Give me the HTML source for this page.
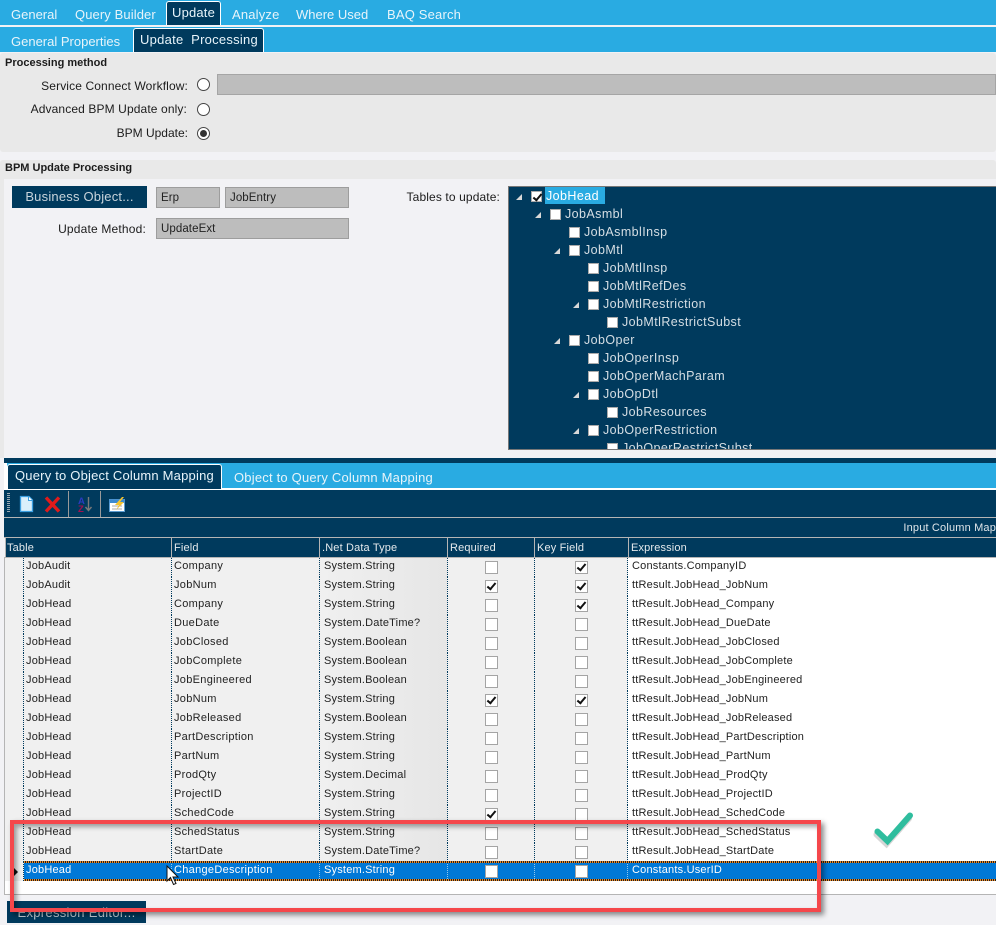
<!DOCTYPE html>
<html><head><meta charset="utf-8">
<style>
html,body{margin:0;padding:0;width:996px;height:925px;overflow:hidden;background:#f2f2f5;font-family:"Liberation Sans",sans-serif}
div,span{position:absolute;white-space:nowrap;box-sizing:border-box}
.t{font-size:13px;letter-spacing:.18px;color:#e8f4fa;line-height:16px}
.l{font-size:12px;letter-spacing:.12px;color:#1c1c1c;line-height:16px}
.b{font-size:11px;font-weight:bold;color:#1c1c1c;letter-spacing:0;line-height:14px}
.r{width:13px;height:13px;border-radius:50%;border:1.5px solid #444;background:#fff}
.f{background:#bdbdbd;border:1px solid #9d9d9d;font-size:11.5px;letter-spacing:.08px;color:#222;line-height:21px;padding-left:4px}
.n{left:0;font-size:12.5px;letter-spacing:.42px;color:#d5dee4;line-height:16px}
.c{width:11px;height:11px;background:#fff;border:1px solid #aaa;margin-left:-1px}
.x{width:0;height:0;margin-left:-1px;border-style:solid;border-width:0 0 6px 6px;border-color:transparent transparent #d8d8d8 transparent}
.h{top:538px;height:19px;background:#003a5d;border-left:1px solid #b5b5b5;color:#e4e9ec;font-size:11px;letter-spacing:.15px;line-height:21px;padding-left:2px}
.g{left:5px;width:991px;height:19px;border-bottom:1px dotted #003a5d;font-size:11px;letter-spacing:.2px;color:#222;line-height:16px}
.g span{top:0;height:19px;padding-left:2px;border-right:1px dotted #003a5d}
.s0{left:0;width:19px;background:#f0f0f0;border-right:1px dotted #003a5d}
.s1{left:19px;width:148px;background:#f0f0f0}
.s2{left:167px;width:148px;background:#f0f0f0;letter-spacing:.3px}
.s3{left:315px;width:128px;padding-left:4px!important;background:linear-gradient(90deg,#f0f0f0,#e6e6e6)}
.s4{left:443px;width:87px;background:#f0f0f0}
.s5{left:530px;width:93px;background:#f0f0f0}
.s6{left:623px;width:368px;background:#fff;padding-left:4px!important;border-right:0!important}
.k{width:11px;height:11px;background:#fff;border:1px solid #a4a4a4;top:3px;z-index:2}
.ck::after{content:"";position:absolute;left:2.500px;top:0;width:3px;height:7px;border:solid #111;border-width:0 2px 2px 0;transform:rotate(40deg)}
</style></head><body>

<div style="left:0;top:0;width:996px;height:25px;background:#29abe2"></div>
<div style="left:0;top:27px;width:996px;height:25px;background:#29abe2"></div>
<div class="t" style="left:11px;top:7px;letter-spacing:0">General</div>
<div class="t" style="left:75px;top:7px;letter-spacing:.1px">Query Builder</div>
<div class="t" style="left:166px;top:1px;width:55px;height:24px;background:#003a5d;border:1px solid #fff;border-bottom:0;border-radius:3px 3px 0 0;padding:3px 0 0 5px">Update</div>
<div class="t" style="left:232px;top:7px">Analyze</div>
<div class="t" style="left:296px;top:7px;letter-spacing:0">Where Used</div>
<div class="t" style="left:387px;top:7px">BAQ Search</div>
<div class="t" style="left:11px;top:34px;letter-spacing:0">General Properties</div>
<div class="t" style="left:133px;top:28px;width:131px;height:24px;background:#003a5d;border:1px solid #fff;border-bottom:0;border-radius:3px 3px 0 0;padding:3px 0 0 6px;letter-spacing:.25px">Update&nbsp; Processing</div>

<div style="left:0;top:53px;width:996px;height:99px;background:#e9e9e9;border-radius:3px"></div>
<div class="b" style="left:5px;top:56px">Processing method</div>
<div class="l" style="right:808px;top:78px">Service Connect Workflow:</div>
<div class="r" style="left:197px;top:78px"></div>
<div style="left:217px;top:74px;width:779px;height:21px;background:#bdbdbd;border:1px solid #a5a5a5"></div>
<div class="l" style="right:809px;top:101px">Advanced BPM Update only:</div>
<div class="r" style="left:197px;top:103px"></div>
<div class="l" style="right:808px;top:125px;letter-spacing:0">BPM Update:</div>
<div class="r" style="left:197px;top:127px"></div>
<div style="left:200px;top:130px;width:7px;height:7px;border-radius:50%;background:#333"></div>

<div style="left:0;top:160px;width:996px;height:19px;background:#e9e9e9;border-radius:3px 3px 0 0"></div>
<div style="left:0;top:179px;width:4px;height:279px;background:#e9e9e9"></div>
<div class="b" style="left:5px;top:161px">BPM Update Processing</div>
<div style="left:12px;top:186px;width:135px;height:22px;background:#003a5d;color:#c8d4dc;font-size:13px;letter-spacing:.2px;line-height:22px;text-align:center">Business Object...</div>
<div class="f" style="left:156px;top:187px;width:64px;height:21px">Erp</div>
<div class="f" style="left:225px;top:187px;width:124px;height:21px">JobEntry</div>
<div class="l" style="right:850px;top:221px;letter-spacing:.18px">Update Method:</div>
<div class="f" style="left:156px;top:218px;width:193px;height:21px">UpdateExt</div>
<div class="l" style="right:496px;top:189px">Tables to update:</div>

<div style="left:508px;top:186px;width:488px;height:264px;background:#003a5d;border:1px solid #777;border-right:0;overflow:hidden">
<div style="left:36px;top:0;width:60px;height:17px;background:#29abe2"></div>
<div class="x" style="left:8px;top:7px"></div><div class="c ck" style="left:23px;top:4px"></div><div class="n" style="left:37px;top:1px;color:#fff">JobHead</div>
<div class="x" style="left:27px;top:25px"></div><div class="c" style="left:42px;top:22px"></div><div class="n" style="left:56px;top:19px">JobAsmbl</div>
<div class="c" style="left:61px;top:40px"></div><div class="n" style="left:75px;top:37px">JobAsmblInsp</div>
<div class="x" style="left:46px;top:61px"></div><div class="c" style="left:61px;top:58px"></div><div class="n" style="left:75px;top:55px">JobMtl</div>
<div class="c" style="left:80px;top:76px"></div><div class="n" style="left:94px;top:73px">JobMtlInsp</div>
<div class="c" style="left:80px;top:94px"></div><div class="n" style="left:94px;top:91px">JobMtlRefDes</div>
<div class="x" style="left:65px;top:115px"></div><div class="c" style="left:80px;top:112px"></div><div class="n" style="left:94px;top:109px">JobMtlRestriction</div>
<div class="c" style="left:99px;top:130px"></div><div class="n" style="left:113px;top:127px">JobMtlRestrictSubst</div>
<div class="x" style="left:46px;top:151px"></div><div class="c" style="left:61px;top:148px"></div><div class="n" style="left:75px;top:145px">JobOper</div>
<div class="c" style="left:80px;top:166px"></div><div class="n" style="left:94px;top:163px">JobOperInsp</div>
<div class="c" style="left:80px;top:184px"></div><div class="n" style="left:94px;top:181px">JobOperMachParam</div>
<div class="x" style="left:65px;top:205px"></div><div class="c" style="left:80px;top:202px"></div><div class="n" style="left:94px;top:199px">JobOpDtl</div>
<div class="c" style="left:99px;top:220px"></div><div class="n" style="left:113px;top:217px">JobResources</div>
<div class="x" style="left:65px;top:241px"></div><div class="c" style="left:80px;top:238px"></div><div class="n" style="left:94px;top:235px">JobOperRestriction</div>
<div class="c" style="left:99px;top:256px"></div><div class="n" style="left:113px;top:253px">JobOperRestrictSubst</div>
</div>

<div style="left:4px;top:458px;width:992px;height:5px;background:#003a5d"></div>
<div style="left:4px;top:463px;width:992px;height:25px;background:#29abe2"></div>
<div style="left:4px;top:488px;width:992px;height:2px;background:#fff"></div>
<div style="left:4px;top:463px;width:3px;height:27px;background:#fff"></div>
<div class="t" style="left:7px;top:464px;width:215px;height:25px;background:#003a5d;border:1px solid #fff;border-bottom:0;border-radius:3px 3px 0 0;padding:3px 0 0 7px;letter-spacing:.2px">Query to Object Column Mapping</div>
<div class="t" style="left:234px;top:470px;letter-spacing:.2px">Object to Query Column Mapping</div>

<div style="left:4px;top:490px;width:992px;height:48px;background:#003a5d"></div>
<div style="left:4px;top:517px;width:992px;height:1px;background:#b5b5b5"></div>
<div style="left:4px;top:537px;width:992px;height:1px;background:#b5b5b5"></div>
<div style="left:7px;top:493px;width:3px;height:20px;background:repeating-linear-gradient(#9aa9b3 0 1px,transparent 1px 2px)"></div>
<div style="left:68px;top:491px;width:1px;height:26px;background:#9a9a9a"></div>
<div style="left:100px;top:491px;width:1px;height:26px;background:#9a9a9a"></div>
<svg style="position:absolute;left:0;top:485px" width="140" height="33" viewBox="0 0 140 33">
<path d="M20.500 11.500H29L32.500 15V26.500H20.500Z" fill="#d9effb" stroke="#3b9fe0" stroke-width="1.300"/><path d="M28.500 11.500V15.500H32.500" fill="#fff" stroke="#3b9fe0"/>
<path d="M46 12.500L59 26.500M59 12.500L46 26.500" stroke="#e01b1b" stroke-width="3.400" fill="none"/>
<path d="M88.500 12V24.500M85.500 22L88.500 25.500L91.500 22" stroke="#7a7a7a" stroke-width="1.400" fill="none"/>
<path d="M109.500 14.500H124.500V26.500H109.500Z" fill="#fff" stroke="#5a9bd0"/><path d="M109.500 14.500H124.500V18H109.500Z" fill="#3b8ad0"/><path d="M112 21H122M112 24H122" stroke="#aaa"/>
<path d="M122 12L115 20H119L116 25L124 17H120L124 12Z" fill="#f4c430"/>
<text x="78" y="19" font-family="Liberation Sans" font-size="9.500" font-weight="bold" fill="#2a3bc0">A</text>
<text x="78" y="27" font-family="Liberation Sans" font-size="9.500" font-weight="bold" fill="#a01050">Z</text>
</svg>
<div style="right:0;top:521px;color:#dfe5e9;font-size:11px;letter-spacing:.17px;line-height:14px">Input Column Map</div>

<div style="left:5px;top:538px;width:991px;height:19px;background:#003a5d"></div>
<div class="h" style="left:5px;width:167px;padding-left:1px">Table</div>
<div class="h" style="left:171px;width:149px">Field</div>
<div class="h" style="left:319px;width:128px">.Net Data Type</div>
<div class="h" style="left:447px;width:87px">Required</div>
<div class="h" style="left:534px;width:94px">Key Field</div>
<div class="h" style="left:628px;width:368px">Expression</div>
<div style="left:5px;top:557px;width:991px;height:1px;background:#b5b5b5;z-index:3"></div>

<div class="g" style="top:558px"><span class="s0"></span><span class="s1">JobAudit</span><span class="s2">Company</span><span class="s3">System.String</span><span class="s4"><i class="k" style="position:absolute;left:37px"></i></span><span class="s5"><i class="k ck" style="position:absolute;left:40px"></i></span><span class="s6">Constants.CompanyID</span></div>
<div class="g" style="top:577px"><span class="s0"></span><span class="s1">JobAudit</span><span class="s2">JobNum</span><span class="s3">System.String</span><span class="s4"><i class="k ck" style="position:absolute;left:37px"></i></span><span class="s5"><i class="k ck" style="position:absolute;left:40px"></i></span><span class="s6">ttResult.JobHead_JobNum</span></div>
<div class="g" style="top:596px"><span class="s0"></span><span class="s1">JobHead</span><span class="s2">Company</span><span class="s3">System.String</span><span class="s4"><i class="k" style="position:absolute;left:37px"></i></span><span class="s5"><i class="k ck" style="position:absolute;left:40px"></i></span><span class="s6">ttResult.JobHead_Company</span></div>
<div class="g" style="top:615px"><span class="s0"></span><span class="s1">JobHead</span><span class="s2">DueDate</span><span class="s3">System.DateTime?</span><span class="s4"><i class="k" style="position:absolute;left:37px"></i></span><span class="s5"><i class="k" style="position:absolute;left:40px"></i></span><span class="s6">ttResult.JobHead_DueDate</span></div>
<div class="g" style="top:634px"><span class="s0"></span><span class="s1">JobHead</span><span class="s2">JobClosed</span><span class="s3">System.Boolean</span><span class="s4"><i class="k" style="position:absolute;left:37px"></i></span><span class="s5"><i class="k" style="position:absolute;left:40px"></i></span><span class="s6">ttResult.JobHead_JobClosed</span></div>
<div class="g" style="top:653px"><span class="s0"></span><span class="s1">JobHead</span><span class="s2">JobComplete</span><span class="s3">System.Boolean</span><span class="s4"><i class="k" style="position:absolute;left:37px"></i></span><span class="s5"><i class="k" style="position:absolute;left:40px"></i></span><span class="s6">ttResult.JobHead_JobComplete</span></div>
<div class="g" style="top:672px"><span class="s0"></span><span class="s1">JobHead</span><span class="s2">JobEngineered</span><span class="s3">System.Boolean</span><span class="s4"><i class="k" style="position:absolute;left:37px"></i></span><span class="s5"><i class="k" style="position:absolute;left:40px"></i></span><span class="s6">ttResult.JobHead_JobEngineered</span></div>
<div class="g" style="top:691px"><span class="s0"></span><span class="s1">JobHead</span><span class="s2">JobNum</span><span class="s3">System.String</span><span class="s4"><i class="k ck" style="position:absolute;left:37px"></i></span><span class="s5"><i class="k ck" style="position:absolute;left:40px"></i></span><span class="s6">ttResult.JobHead_JobNum</span></div>
<div class="g" style="top:710px"><span class="s0"></span><span class="s1">JobHead</span><span class="s2">JobReleased</span><span class="s3">System.Boolean</span><span class="s4"><i class="k" style="position:absolute;left:37px"></i></span><span class="s5"><i class="k" style="position:absolute;left:40px"></i></span><span class="s6">ttResult.JobHead_JobReleased</span></div>
<div class="g" style="top:729px"><span class="s0"></span><span class="s1">JobHead</span><span class="s2">PartDescription</span><span class="s3">System.String</span><span class="s4"><i class="k" style="position:absolute;left:37px"></i></span><span class="s5"><i class="k" style="position:absolute;left:40px"></i></span><span class="s6">ttResult.JobHead_PartDescription</span></div>
<div class="g" style="top:748px"><span class="s0"></span><span class="s1">JobHead</span><span class="s2">PartNum</span><span class="s3">System.String</span><span class="s4"><i class="k" style="position:absolute;left:37px"></i></span><span class="s5"><i class="k" style="position:absolute;left:40px"></i></span><span class="s6">ttResult.JobHead_PartNum</span></div>
<div class="g" style="top:767px"><span class="s0"></span><span class="s1">JobHead</span><span class="s2">ProdQty</span><span class="s3">System.Decimal</span><span class="s4"><i class="k" style="position:absolute;left:37px"></i></span><span class="s5"><i class="k" style="position:absolute;left:40px"></i></span><span class="s6">ttResult.JobHead_ProdQty</span></div>
<div class="g" style="top:786px"><span class="s0"></span><span class="s1">JobHead</span><span class="s2">ProjectID</span><span class="s3">System.String</span><span class="s4"><i class="k" style="position:absolute;left:37px"></i></span><span class="s5"><i class="k" style="position:absolute;left:40px"></i></span><span class="s6">ttResult.JobHead_ProjectID</span></div>
<div class="g" style="top:805px"><span class="s0"></span><span class="s1">JobHead</span><span class="s2">SchedCode</span><span class="s3">System.String</span><span class="s4"><i class="k ck" style="position:absolute;left:37px"></i></span><span class="s5"><i class="k" style="position:absolute;left:40px"></i></span><span class="s6">ttResult.JobHead_SchedCode</span></div>
<div class="g" style="top:824px"><span class="s0"></span><span class="s1">JobHead</span><span class="s2">SchedStatus</span><span class="s3">System.String</span><span class="s4"><i class="k" style="position:absolute;left:37px"></i></span><span class="s5"><i class="k" style="position:absolute;left:40px"></i></span><span class="s6">ttResult.JobHead_SchedStatus</span></div>
<div class="g" style="top:843px"><span class="s0"></span><span class="s1">JobHead</span><span class="s2">StartDate</span><span class="s3">System.DateTime?</span><span class="s4"><i class="k" style="position:absolute;left:37px"></i></span><span class="s5"><i class="k" style="position:absolute;left:40px"></i></span><span class="s6">ttResult.JobHead_StartDate</span></div>
<div class="g" style="top:862px;height:19px;color:#fff;border-bottom:0"><span class="s0"></span>
<span class="s1" style="background:#0078d7;border-right-color:#8fc8f0">JobHead</span><span class="s2" style="background:#0078d7;border-right-color:#8fc8f0">ChangeDescription</span><span class="s3" style="background:#0078d7;border-right-color:#8fc8f0">System.String</span><span class="s4" style="background:#0078d7;border-right-color:#8fc8f0"><i class="k" style="position:absolute;left:37px"></i></span><span class="s5" style="background:#0078d7;border-right-color:#8fc8f0"><i class="k" style="position:absolute;left:40px"></i></span><span class="s6" style="background:#0078d7">Constants.UserID</span></div>
<div style="left:24px;top:861px;width:972px;height:2px;background:repeating-linear-gradient(90deg,#f08a24 0 1px,#222 1px 2px);z-index:3"></div>
<div style="left:24px;top:879px;width:972px;height:2px;background:repeating-linear-gradient(90deg,#f08a24 0 1px,#222 1px 2px);z-index:3"></div>
<div style="left:14px;top:868px;width:0;height:0;border-style:solid;border-width:4px 0 4px 4px;border-color:transparent transparent transparent #111"></div>
<div style="left:5px;top:881px;width:991px;height:14px;background:#fff;border-bottom:1px solid #b5b5b5"></div>
<div style="left:4px;top:557px;width:1px;height:338px;background:#b5b5b5"></div>

<div style="left:7px;top:901px;width:139px;height:22px;background:#003a5d;color:#c8d4dc;font-size:13px;letter-spacing:.3px;line-height:24px;text-align:center">Expression Editor...</div>

<div style="left:10px;top:820px;width:811px;height:92px;border:4px solid #f5474b;z-index:5;box-shadow:3px 3px 5px rgba(0,0,0,.45),inset 3px 3px 5px rgba(0,0,0,.35)"></div>

<svg style="position:absolute;left:0;top:0;z-index:6" width="996" height="925" viewBox="0 0 996 925">
<path d="M877.500 831.500L887.500 841L910 815.500" fill="none" stroke="rgba(0,0,0,.16)" stroke-width="6" stroke-linecap="round" transform="translate(-1 3)"/>
<path d="M877.500 831.500L887.500 841L910 815.500" fill="none" stroke="#2fbd9e" stroke-width="6" stroke-linecap="round"/>
<path d="M167 866V881L170.500 877.500L173.500 884.500L176 883.500L173 877H178Z" fill="#fff" stroke="#111" stroke-width="1"/>
</svg>
</body></html>
